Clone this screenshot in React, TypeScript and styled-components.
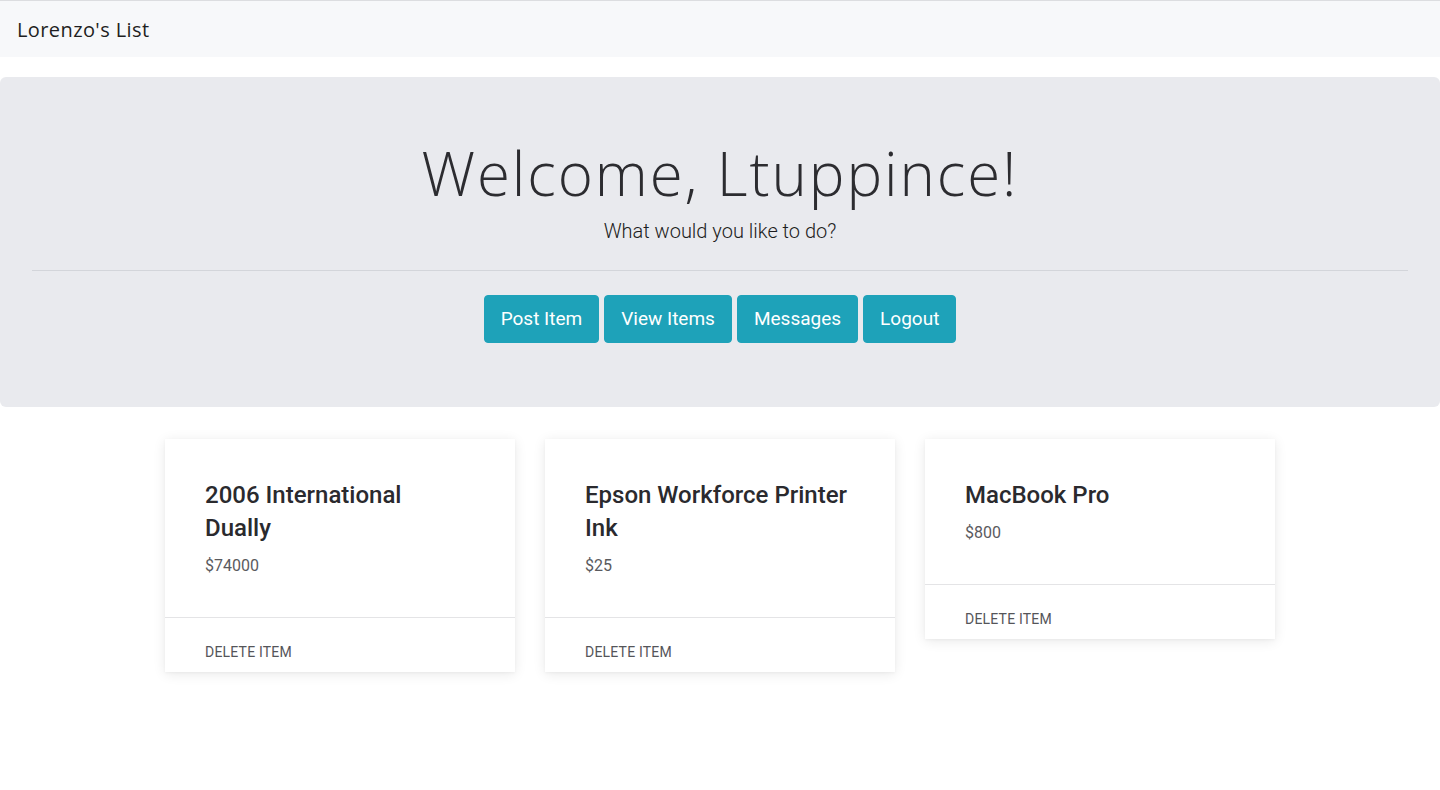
import React from "react";
import styled, { createGlobalStyle } from "styled-components";

const Global = createGlobalStyle`
  html, body { margin: 0; padding: 0; background: #fff; }
  body { font-family: "Liberation Sans", Arial, sans-serif; color: #212529; }
  * { box-sizing: border-box; }
`;

const Navbar = styled.nav`
  height: 57px;
  border-top: 1px solid #dcdde0;
  background: #f7f8fa;
  display: flex;
  align-items: center;
  padding: 0 17px;
`;

const Brand = styled.span`
  font-family: "Open Sans", sans-serif;
  font-size: 20px;
  color: #1f1f22;
  letter-spacing: 0.4px;
`;

const Jumbotron = styled.section`
  margin-top: 20px;
  background: #e9eaee;
  border-radius: 6px;
  padding: 64px 32px;
  text-align: center;
`;

const Title = styled.h1`
  margin: 0 0 11px;
  font-family: "Open Sans", sans-serif;
  font-weight: 300;
  font-size: 60px;
  letter-spacing: 1.9px;
  line-height: 64px;
  color: #2c2c30;
`;

const Lead = styled.p`
  margin: 0;
  font-family: "Roboto", sans-serif;
  font-weight: 300;
  font-size: 20px;
  line-height: 30px;
  color: #1c1c20;
`;

const Rule = styled.hr`
  margin: 24px 0;
  border: 0;
  border-top: 1px solid #d3d5da;
`;

const Actions = styled.div`
  display: flex;
  justify-content: center;
  gap: 5px;
`;

const Button = styled.button`
  font-family: "Roboto", sans-serif;
  font-size: 19px;
  line-height: 30px;
  padding: 8px 16px;
  height: 48px;
  border: 1px solid #1ea2b9;
  border-radius: 4px;
  background: #1ea2b9;
  color: #fff;
  cursor: pointer;
`;

const Cards = styled.div`
  width: 1110px;
  margin: 32px auto 0;
  padding-bottom: 40px;
  display: grid;
  grid-template-columns: repeat(3, 350px);
  gap: 30px;
  align-items: start;
`;

const Card = styled.article`
  background: #fff;
  box-shadow: 0 2px 12px rgba(0, 0, 0, 0.09), 0 1px 3px rgba(0, 0, 0, 0.04);
`;

const CardBody = styled.div`
  padding: 40px 40px 39px;
  border-bottom: 1px solid #e4e4e6;
`;

const CardTitle = styled.h2`
  margin: 0 0 8px;
  padding-right: 5px;
  font-family: "Roboto", sans-serif;
  font-weight: 500;
  font-size: 24px;
  line-height: 33px;
  color: #2a2a2e;
`;

const Price = styled.div`
  font-family: "Roboto", sans-serif;
  font-size: 16px;
  line-height: 24px;
  padding-top: 1px;
  color: #5a5a5e;
`;

const CardAction = styled.div`
  padding: 24px 40px 9px;
  font-family: "Roboto", sans-serif;
  font-size: 14px;
  line-height: 21px;
  color: #555559;
  text-transform: uppercase;
  letter-spacing: 0.2px;
`;

const items = [
  { title: "2006 International Dually", price: "$74000" },
  { title: "Epson Workforce Printer Ink", price: "$25" },
  { title: "MacBook Pro", price: "$800" },
];

export default function App() {
  return (
    <>
      <Global />
      <Navbar>
        <Brand>Lorenzo's List</Brand>
      </Navbar>
      <Jumbotron>
        <Title>Welcome, Ltuppince!</Title>
        <Lead>What would you like to do?</Lead>
        <Rule />
        <Actions>
          <Button>Post Item</Button>
          <Button>View Items</Button>
          <Button>Messages</Button>
          <Button>Logout</Button>
        </Actions>
      </Jumbotron>
      <Cards>
        {items.map((it) => (
          <Card key={it.title}>
            <CardBody>
              <CardTitle>{it.title}</CardTitle>
              <Price>{it.price}</Price>
            </CardBody>
            <CardAction>Delete Item</CardAction>
          </Card>
        ))}
      </Cards>
    </>
  );
}
